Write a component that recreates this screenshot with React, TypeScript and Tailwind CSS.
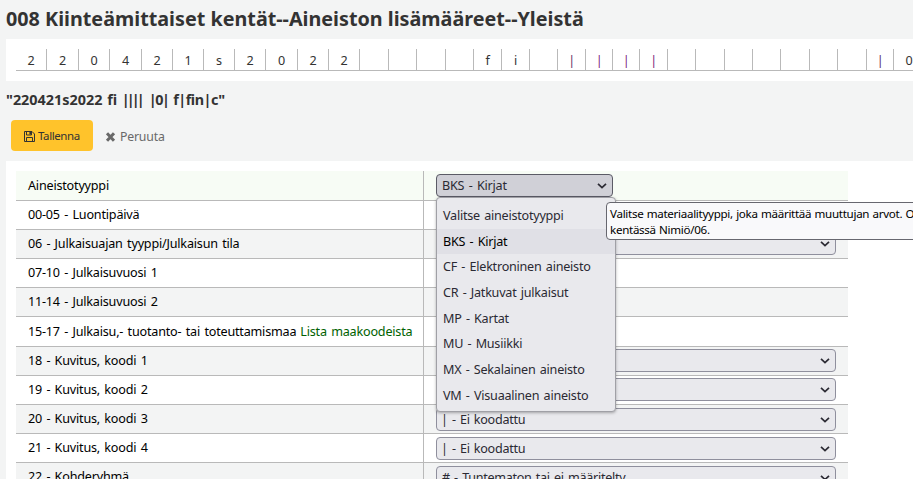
import React from "react";

type Cell = { w: string; ch?: string; color?: string };

const cells: Cell[] = [
  { w: "w-[31px]", ch: "2" },
  { w: "w-8", ch: "2" },
  { w: "w-[31px]", ch: "0" },
  { w: "w-8", ch: "4" },
  { w: "w-[31px]", ch: "2" },
  { w: "w-[31px]", ch: "1" },
  { w: "w-[31px]", ch: "s" },
  { w: "w-[31px]", ch: "2" },
  { w: "w-8", ch: "0" },
  { w: "w-[31px]", ch: "2" },
  { w: "w-[31px]", ch: "2" },
  { w: "w-[29px]" },
  { w: "w-7" },
  { w: "w-[29px]" },
  { w: "w-7" },
  { w: "w-7", ch: "f" },
  { w: "w-7", ch: "i" },
  { w: "w-7" },
  { w: "w-7", ch: "|", color: "text-[#5c2a66]" },
  { w: "w-[27px]", ch: "|", color: "text-[#7a1c7a]" },
  { w: "w-[27px]", ch: "|", color: "text-[#7a1c7a]" },
  { w: "w-7", ch: "|", color: "text-[#7a1c7a]" },
  { w: "w-7" },
  { w: "w-[29px]" },
  { w: "w-7" },
  { w: "w-7" },
  { w: "w-[29px]" },
  { w: "w-7" },
  { w: "w-[29px]" },
  { w: "w-[27px]", ch: "|", color: "text-[#5c2a66]" },
  { w: "w-[31px]", ch: "0" },
];

type Row = { label: string; h: string; bg: string; link?: string; select?: string; pad?: string };

const rows: Row[] = [
  { label: "00-05 - Luontipäivä", h: "h-[29px]", bg: "bg-white" },
  { label: "06 - Julkaisuajan tyyppi/Julkaisun tila", h: "h-[29px]", bg: "bg-[#f3f4f4]", select: "", pad: "pt-[2px]" },
  { label: "07-10 - Julkaisuvuosi 1", h: "h-[29px]", bg: "bg-white" },
  { label: "11-14 - Julkaisuvuosi 2", h: "h-[29px]", bg: "bg-[#f3f4f4]" },
  { label: "15-17 - Julkaisu,- tuotanto- tai toteuttamismaa", h: "h-[30px]", bg: "bg-white", link: "Lista maakoodeista" },
  { label: "18 - Kuvitus, koodi 1", h: "h-[29px]", bg: "bg-[#f3f4f4]", select: "", pad: "pt-[2px]" },
  { label: "19 - Kuvitus, koodi 2", h: "h-[29px]", bg: "bg-white", select: "", pad: "pt-[2px]" },
  { label: "20 - Kuvitus, koodi 3", h: "h-[29px]", bg: "bg-[#f3f4f4]", select: "| - Ei koodattu", pad: "pt-[3px]" },
  { label: "21 - Kuvitus, koodi 4", h: "h-[29px]", bg: "bg-white", select: "| - Ei koodattu", pad: "pt-[3px]" },
  { label: "22 - Kohderyhmä", h: "h-[29px]", bg: "bg-[#f3f4f4]", select: "# - Tuntematon tai ei määritelty", pad: "pt-[3px]" },
];

const options = [
  "Valitse aineistotyyppi",
  "BKS - Kirjat",
  "CF - Elektroninen aineisto",
  "CR - Jatkuvat julkaisut",
  "MP - Kartat",
  "MU - Musiikki",
  "MX - Sekalainen aineisto",
  "VM - Visuaalinen aineisto",
];

function Chevron() {
  return (
    <svg width="10" height="6" viewBox="0 0 10 6" fill="none" className="shrink-0">
      <path d="M1 0.8 L5 4.6 L9 0.8" stroke="#2b2a33" strokeWidth="1.7" />
    </svg>
  );
}

function Floppy() {
  return (
    <svg width="11" height="11" viewBox="0 0 11 11" fill="none" stroke="#333" className="shrink-0">
      <path d="M0.5 0.5 H8 L10.5 3 V10.5 H0.5 Z M2.5 10.5 V6.5 H8.5 V10.5 M2.5 0.5 V4 H7.5 V0.5" />
      <path d="M5.4 1 H7 V3.4 H5.4 Z" fill="#333" stroke="none" />
    </svg>
  );
}

function Select({ value }: { value: string }) {
  return (
    <div className="flex h-[23px] w-[400px] items-center justify-between rounded-[4px] border border-[#8f8f9d] bg-[#e9e9ed] pr-[5px] pl-[5px] tracking-[-0.3px] text-[#2b2a33]">
      <span className={value.startsWith("|") ? "-ml-px pt-[2px]" : "pt-[2px]"}>{value}</span>
      <Chevron />
    </div>
  );
}

export default function App() {
  return (
    <div className="flex h-[479px] w-[913px] flex-col overflow-hidden bg-[#f3f4f4] font-['Noto_Sans',sans-serif] text-[12.6px] tracking-[-0.2px] whitespace-nowrap text-black [word-spacing:1.3px]">
      <h1 className="h-[39px] shrink-0 pt-[6px] pl-[6px] text-[19.75px] leading-[26px] font-bold tracking-normal text-[#333] [word-spacing:0px]">
        <span>008 Kiinteämittaiset kentät--Aineiston lisämääreet--Yleistä</span>
      </h1>

      <div className="ml-[6px] flex h-[42px] shrink-0 overflow-hidden bg-white pt-[10px] pl-[10px]">
        {cells.map((c, i) => (
          <div
            key={i}
            className={`${c.w} flex h-[22px] shrink-0 justify-center border-r border-b border-[#b9b9b9] pt-px leading-[21px] ${c.color ?? "text-[#333]"}`}
          >
            {c.ch}
          </div>
        ))}
      </div>

      <h2 className="h-[39px] shrink-0 pt-[9px] pl-[6px] text-[14.4px] leading-5 font-bold tracking-normal text-[#333] [word-spacing:1px]">
        "220421s2022 fi <span className="tracking-[-2.9px]">||||</span>{" "}
        <span className="ml-[2px] tracking-[-1.4px]">|0|</span>{" "}
        <span className="tracking-[-0.5px]">f|fin|c"</span>
      </h2>

      <div className="flex h-[41px] shrink-0 pl-[11px]">
        <button className="flex h-[31px] w-[82px] items-center gap-[3px] rounded-[4px] bg-[#ffc32b] pt-px pl-[13px] text-[11.5px] tracking-[-0.4px] text-[#333]">
          <Floppy />
          <span>Tallenna</span>
        </button>
        <button className="ml-3 flex h-[31px] items-center gap-1 pt-[3px] text-[12.3px] text-[#696969]">
          <svg width="11" height="10" viewBox="0 0 11 10" className="-mt-px">
            <path d="M2 1.2 L9 8.8 M9 1.2 L2 8.8" stroke="#696969" strokeWidth="3" />
          </svg>
          <span>Peruuta</span>
        </button>
      </div>

      <div className="ml-[6px] min-h-0 flex-1 bg-white pt-[10px] pl-[10px]">
        <div className="w-[832px]">
          <div className="flex h-[30px] border-b border-[#b9b9b9] bg-[#f7fcf5]">
            <div className="flex w-[408px] items-center border-r border-[#b9b9b9] pt-px pl-3">
              <span>Aineistotyyppi</span>
            </div>
            <div className="relative pt-[3px] pl-3">
              <div className="flex h-[23px] w-[177px] items-center justify-between rounded-[4px] border border-[#5b5b66] bg-[#d0d0d7] px-[5px] text-[#2b2a33]">
                <span className="pt-[2px]">BKS - Kirjat</span>
                <Chevron />
              </div>
              <div className="absolute top-[26px] left-3 z-10 flex h-[215px] w-[180px] flex-col rounded-[4px] border border-[#a0a0a6] bg-[#e9e9ed] pt-[5px] tracking-[-0.24px] text-[#2b2a33] shadow-[0_1px_3px_rgba(0,0,0,0.3)]">
                {options.map((o) => (
                  <div
                    key={o}
                    className={`flex h-[25.7px] shrink-0 items-center pt-px pl-[6px] ${o === "BKS - Kirjat" ? "bg-[#e0e0e6] text-black" : ""}`}
                  >
                    <span>{o}</span>
                  </div>
                ))}
              </div>
              <div className="absolute top-[31px] left-[182px] z-20 h-[38px] w-[400px] rounded-[4px] border border-[#67676f] bg-[#f9f9fb] pt-[3px] pl-[3px] text-[11.6px] leading-4 tracking-[-0.3px] text-black [word-spacing:0.6px]">
                <div>Valitse materiaalityyppi, joka määrittää muuttujan arvot. Oltava sama kuin</div>
                <div>kentässä Nimiö/06.</div>
              </div>
            </div>
          </div>
          {rows.map((r) => (
            <div key={r.label} className={`flex border-b border-[#b9b9b9] ${r.h} ${r.bg}`}>
              <div className="flex w-[408px] items-center gap-[4px] border-r border-[#b9b9b9] pt-px pl-3">
                <span>{r.label}</span>
                {r.link && <a className="text-[#006100]">{r.link}</a>}
              </div>
              <div className={`pl-3 ${r.pad ?? ""}`}>{r.select !== undefined && <Select value={r.select} />}</div>
            </div>
          ))}
        </div>
      </div>
    </div>
  );
}
